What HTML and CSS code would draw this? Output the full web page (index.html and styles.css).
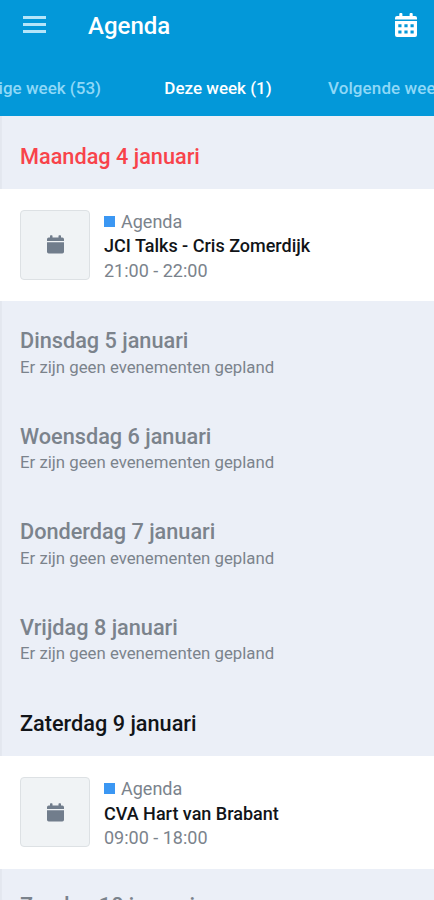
FILE: index.html
```html
<!DOCTYPE html>
<html lang="nl">
<head>
    <meta charset="UTF-8">
    <meta name="viewport" content="width=device-width, initial-scale=1.0">
    <title>Agenda</title>
    <link rel="stylesheet" href="styles.css">
</head>
<body>
    <svg width="0" height="0" class="sprite">
        <symbol id="calendar" viewBox="0 0 17 19">
            <path d="M0 6V4.2Q0 2.5 1.7 2.5H3V1Q3 .3 3.7 .3H4.8Q5.5 .3 5.5 1V2.5H11.5V1Q11.5 .3 12.2 .3H13.3Q14 .3 14 1V2.5H15.3Q17 2.5 17 4.2V6Z"/>
            <path d="M0 7.2H17V16.8Q17 18.5 15.3 18.5H1.7Q0 18.5 0 16.8Z"/>
        </symbol>
    </svg>

    <header class="header">
        <div class="toolbar">
            <button class="menu-button" aria-label="Menu">
                <span></span>
                <span></span>
                <span></span>
            </button>
            <h1>Agenda</h1>
            <button class="calendar-button" aria-label="Kalender">
                <svg width="24" height="26" viewBox="0 0 24 26" fill="currentColor">
                    <path d="M1 7.5V6Q1 4 3 4H5.3V2Q5.3 1 6.3 1H7.4Q8.4 1 8.4 2V4H15.6V2Q15.6 1 16.6 1H17.7Q18.7 1 18.7 2V4H21Q23 4 23 6V7.5Z"/>
                    <path fill-rule="evenodd" d="M1 9H23V23Q23 25 21 25H3Q1 25 1 23ZM4.3 12.3V15.3H7.5V12.3ZM10.4 12.3V15.3H13.6V12.3ZM16.5 12.3V15.3H19.7V12.3ZM4.3 18.5V21.5H7.5V18.5ZM10.4 18.5V21.5H13.6V18.5ZM16.5 18.5V21.5H19.7V18.5Z"/>
                </svg>
            </button>
        </div>
        <nav class="weeks">
            <a class="week previous">Vorige week (53)</a>
            <a class="week active">Deze week (1)</a>
            <a class="week next">Volgende week (2)</a>
        </nav>
    </header>

    <main>
        <section class="day today">
            <h2>Maandag 4 januari</h2>
            <article class="event">
                <div class="thumb"><svg><use href="#calendar"/></svg></div>
                <div class="info">
                    <p class="category">Agenda</p>
                    <h3>JCI Talks - Cris Zomerdijk</h3>
                    <p>21:00 - 22:00</p>
                </div>
            </article>
        </section>
        <section class="day empty">
            <h2>Dinsdag 5 januari</h2>
            <p>Er zijn geen evenementen gepland</p>
        </section>
        <section class="day empty">
            <h2>Woensdag 6 januari</h2>
            <p>Er zijn geen evenementen gepland</p>
        </section>
        <section class="day empty">
            <h2>Donderdag 7 januari</h2>
            <p>Er zijn geen evenementen gepland</p>
        </section>
        <section class="day empty">
            <h2>Vrijdag 8 januari</h2>
            <p>Er zijn geen evenementen gepland</p>
        </section>
        <section class="day">
            <h2>Zaterdag 9 januari</h2>
            <article class="event">
                <div class="thumb"><svg><use href="#calendar"/></svg></div>
                <div class="info">
                    <p class="category">Agenda</p>
                    <h3>CVA Hart van Brabant</h3>
                    <p>09:00 - 18:00</p>
                </div>
            </article>
        </section>
        <section class="day empty last">
            <h2>Zondag 10 januari</h2>
        </section>
    </main>
</body>
</html>
```
FILE: styles.css
```css
:root {
    --primary-color: #0398d9;
    --background: #ebeff7;
    --muted: #7b838c;
    --today: #f8434a;
    --marker: #3b97f3;
}

* {
    margin: 0;
    padding: 0;
    box-sizing: border-box;
}

body {
    height: 100vh;
    overflow: hidden;
    font-family: Roboto, sans-serif;
    background-color: var(--background);
    color: #111418;
    box-shadow: inset 2px 0 1px rgba(0,0,0,0.03);
}

.sprite {
    position: absolute;
}

button {
    border: none;
    background: none;
    color: #fff;
}

.header {
    height: 116px;
    background-color: var(--primary-color);
    color: #fff;
    overflow: hidden;
}

.toolbar {
    display: flex;
    align-items: center;
    height: 50px;
    padding: 0 16px 0 23px;
}

.menu-button {
    display: flex;
    flex-direction: column;
    gap: 4px;
    width: 23px;
    margin-right: 42px;
    padding-bottom: 2px;
}

.menu-button span {
    height: 3px;
    background-color: #b5e5f9;
}

h1 {
    flex: 1;
    padding-top: 2px;
    font-size: 24px;
    font-weight: 500;
    line-height: 50px;
}

.calendar-button {
    height: 26px;
}

.weeks {
    display: grid;
    grid-template-columns: 101px 1fr 106px;
    height: 66px;
    line-height: 76px;
    font-size: 17px;
    font-weight: 500;
    white-space: nowrap;
}

.week {
    color: #8fd8f7;
}

.previous {
    justify-self: end;
}

.active {
    justify-self: center;
    padding-left: 7px;
    color: #fff;
}

.next {
    letter-spacing: 0.1px;
}

.day h2 {
    height: 72.7px;
    padding-left: 20px;
    font-size: 21.7px;
    font-weight: 500;
    line-height: 80px;
}

.today h2 {
    color: var(--today);
    line-height: 81px;
}

.empty {
    height: 95.6px;
    color: var(--muted);
}

.empty h2 {
    height: 53.4px;
}

.empty p {
    padding-left: 20px;
    font-size: 16.8px;
    line-height: 24px;
}

.last {
    height: 34px;
    margin-top: -3px;
    overflow: hidden;
}

.event {
    display: flex;
    gap: 14px;
    height: 112.5px;
    padding: 21px 20px 20px;
    background-color: #fff;
    color: var(--muted);
}

.thumb {
    display: flex;
    justify-content: center;
    align-items: center;
    width: 70px;
    height: 70px;
    border: 1px solid #dde1e4;
    border-radius: 4px;
    background-color: #f0f3f5;
}

.thumb svg {
    width: 17px;
    height: 19px;
    fill: #717d8c;
}

.info {
    font-size: 18px;
    line-height: 24.4px;
}

.info h3 {
    color: #111418;
    font-size: 18px;
    font-weight: 500;
}

.category::before {
    content: "";
    display: inline-block;
    width: 11px;
    height: 11px;
    margin-right: 6px;
    vertical-align: 1px;
    background-color: var(--marker);
}
```
